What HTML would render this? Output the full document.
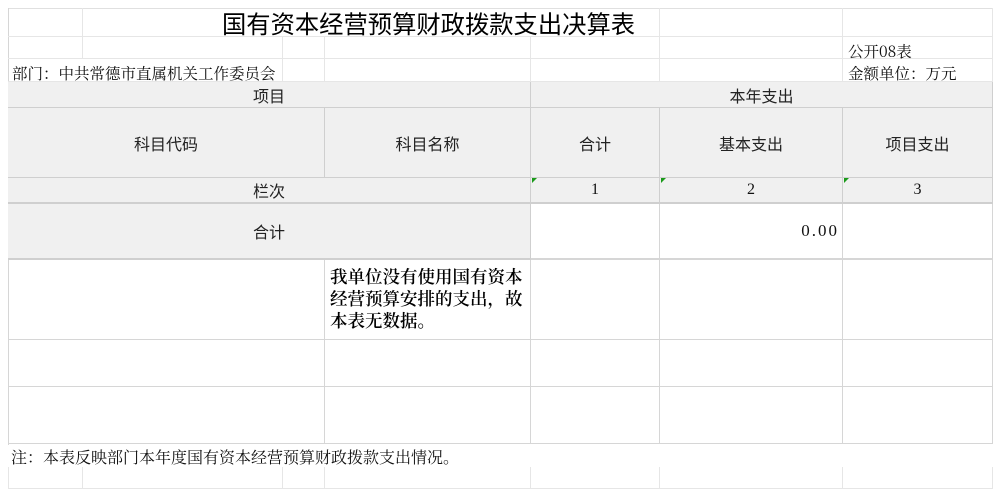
<!DOCTYPE html>
<html><head><meta charset="utf-8"><style>
body{margin:0;width:1000px;height:497px;background:#fff;position:relative;overflow:hidden;font-family:"Noto Serif CJK SC","Liberation Serif",serif;color:#111}
.c{position:absolute;box-sizing:border-box;border-right:1px solid #d6d6d6;border-bottom:1px solid #d6d6d6;display:flex;align-items:center;justify-content:center;font-size:15px}
.g{background:#f0f0f0;border-color:#cfcfcf}
.s{font-family:"Noto Sans CJK SC","Liberation Sans",sans-serif;font-size:16px;color:#222;font-weight:400}
.tri{position:absolute;width:0;height:0;border-top:5px solid #1a9a1a;border-right:5px solid transparent}
.t{position:absolute;font-size:15.5px;white-space:nowrap;line-height:18px}
</style></head><body>
<div style="position:absolute;left:8px;top:8px;width:985px;height:1px;background:#e0e0e0"></div>
<div style="position:absolute;left:8px;top:8px;width:1px;height:437px;background:#d6d6d6"></div>
<div class="c" style="left:8px;top:8px;width:75px;height:29px;border-color:#e6e6e6"></div>
<div class="c" style="left:83px;top:8px;width:577px;height:29px;border-color:#e6e6e6"></div>
<div class="t" style="left:222px;top:9px;font-size:24.3px;line-height:28px;font-family:'Noto Sans CJK SC',sans-serif;color:#000;font-weight:400">国有资本经营预算财政拨款支出决算表</div>
<div class="c" style="left:660px;top:8px;width:183px;height:29px;border-color:#e6e6e6"></div>
<div class="c" style="left:843px;top:8px;width:150px;height:29px;border-color:#e6e6e6"></div>
<div class="c" style="left:8px;top:37px;width:75px;height:22px;border-color:#e6e6e6"></div>
<div class="c" style="left:83px;top:37px;width:200px;height:22px;border-color:#e6e6e6"></div>
<div class="c" style="left:283px;top:37px;width:42px;height:22px;border-color:#e6e6e6"></div>
<div class="c" style="left:325px;top:37px;width:206px;height:22px;border-color:#e6e6e6"></div>
<div class="c" style="left:531px;top:37px;width:129px;height:22px;border-color:#e6e6e6"></div>
<div class="c" style="left:660px;top:37px;width:183px;height:22px;border-color:#e6e6e6"></div>
<div class="c" style="left:843px;top:37px;width:150px;height:22px;border-color:#e6e6e6"></div>
<div class="t" style="left:848px;top:42px">公开08表</div>
<div class="c" style="left:8px;top:59px;width:275px;height:23px;border-color:#e6e6e6"></div>
<div class="c" style="left:283px;top:59px;width:42px;height:23px;border-color:#e6e6e6"></div>
<div class="c" style="left:325px;top:59px;width:206px;height:23px;border-color:#e6e6e6"></div>
<div class="c" style="left:531px;top:59px;width:129px;height:23px;border-color:#e6e6e6"></div>
<div class="c" style="left:660px;top:59px;width:183px;height:23px;border-color:#e6e6e6"></div>
<div class="c" style="left:843px;top:59px;width:150px;height:23px;border-color:#e6e6e6"></div>
<div class="t" style="left:12px;top:64px">部门：中共常德市直属机关工作委员会</div>
<div class="t" style="left:848px;top:64px">金额单位：万元</div>
<div class="c g s" style="left:8px;top:82px;width:523px;height:26px">项目</div>
<div class="c g s" style="left:531px;top:82px;width:462px;height:26px">本年支出</div>
<div class="c g s" style="left:8px;top:108px;width:317px;height:70px">科目代码</div>
<div class="c g s" style="left:325px;top:108px;width:206px;height:70px">科目名称</div>
<div class="c g s" style="left:531px;top:108px;width:129px;height:70px">合计</div>
<div class="c g s" style="left:660px;top:108px;width:183px;height:70px">基本支出</div>
<div class="c g s" style="left:843px;top:108px;width:150px;height:70px">项目支出</div>
<div class="c g s" style="left:8px;top:178px;width:523px;height:26px;border-bottom-width:2px">栏次</div>
<div class="c g" style="left:531px;top:178px;width:129px;height:26px;border-bottom-width:2px;font-family:'Liberation Serif',serif;font-size:16px">1</div>
<div class="c g" style="left:660px;top:178px;width:183px;height:26px;border-bottom-width:2px;font-family:'Liberation Serif',serif;font-size:16px">2</div>
<div class="c g" style="left:843px;top:178px;width:150px;height:26px;border-bottom-width:2px;font-family:'Liberation Serif',serif;font-size:16px">3</div>
<div class="tri" style="left:532px;top:178px"></div>
<div class="tri" style="left:661px;top:178px"></div>
<div class="tri" style="left:844px;top:178px"></div>
<div class="c g s" style="left:8px;top:204px;width:523px;height:56px;border-bottom-width:2px">合计</div>
<div class="c" style="left:531px;top:204px;width:129px;height:56px;border-bottom-width:2px"></div>
<div class="c" style="left:660px;top:204px;width:183px;height:56px;border-bottom-width:2px;justify-content:flex-end;padding-right:3px;font-size:17px;font-family:'Liberation Serif',serif;letter-spacing:2px">0.00</div>
<div class="c" style="left:843px;top:204px;width:150px;height:56px;border-bottom-width:2px"></div>
<div class="c" style="left:8px;top:260px;width:317px;height:80px"></div>
<div class="c" style="left:325px;top:260px;width:206px;height:80px;align-items:flex-start;justify-content:flex-start;padding:6px 2px 0 5px;font-size:17.5px;line-height:22px;font-weight:600;color:#000">我单位没有使用国有资本经营预算安排的支出，故本表无数据。</div>
<div class="c" style="left:531px;top:260px;width:129px;height:80px"></div>
<div class="c" style="left:660px;top:260px;width:183px;height:80px"></div>
<div class="c" style="left:843px;top:260px;width:150px;height:80px"></div>
<div class="c" style="left:8px;top:340px;width:317px;height:47px"></div>
<div class="c" style="left:325px;top:340px;width:206px;height:47px"></div>
<div class="c" style="left:531px;top:340px;width:129px;height:47px"></div>
<div class="c" style="left:660px;top:340px;width:183px;height:47px"></div>
<div class="c" style="left:843px;top:340px;width:150px;height:47px"></div>
<div class="c" style="left:8px;top:387px;width:317px;height:57px"></div>
<div class="c" style="left:325px;top:387px;width:206px;height:57px"></div>
<div class="c" style="left:531px;top:387px;width:129px;height:57px"></div>
<div class="c" style="left:660px;top:387px;width:183px;height:57px"></div>
<div class="c" style="left:843px;top:387px;width:150px;height:57px"></div>
<div class="t" style="left:11px;top:447px;font-size:16px;line-height:20px">注：本表反映部门本年度国有资本经营预算财政拨款支出情况。</div>
<div class="c" style="left:8px;top:467px;width:75px;height:22px;border-color:#e6e6e6;border-left:1px solid #e6e6e6"></div>
<div class="c" style="left:83px;top:467px;width:200px;height:22px;border-color:#e6e6e6"></div>
<div class="c" style="left:283px;top:467px;width:42px;height:22px;border-color:#e6e6e6"></div>
<div class="c" style="left:325px;top:467px;width:206px;height:22px;border-color:#e6e6e6"></div>
<div class="c" style="left:531px;top:467px;width:129px;height:22px;border-color:#e6e6e6"></div>
<div class="c" style="left:660px;top:467px;width:183px;height:22px;border-color:#e6e6e6"></div>
<div class="c" style="left:843px;top:467px;width:150px;height:22px;border-color:#e6e6e6"></div>
</body></html>
